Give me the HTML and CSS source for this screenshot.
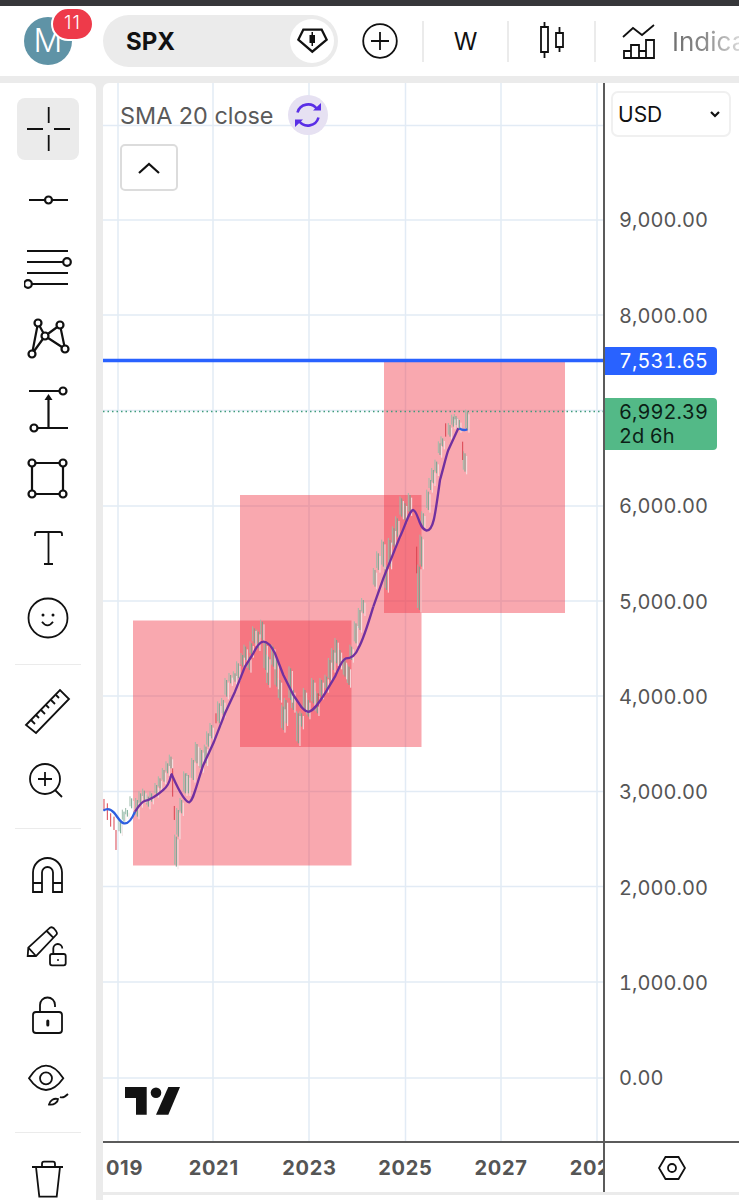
FILE: index.html
```html
<!DOCTYPE html>
<html lang="en">
<head>
    <meta charset="UTF-8">
    <meta name="viewport" content="width=device-width, initial-scale=1.0">
    <title>SPX chart</title>
    <link rel="stylesheet" href="styles.css">
</head>
<body>
    <div class="status-bar"></div>

    <header class="topbar">
        <div class="avatar">M<span class="avatar-count">11</span></div>
        <div class="symbol">
            <span class="symbol-name">SPX</span>
            <span class="symbol-badge">
                <svg class="line-icon" width="44" height="44" viewBox="0 0 44 44">
                    <path d="M13.3 10.7H31.7L36.7 20.7 22.3 32.7 8.3 20.7Z"/>
                    <path class="solid" d="M19.5 16H21.5V13H23V16H25V24H23V27H21.5V24H19.5Z"/>
                </svg>
            </span>
        </div>
        <svg class="line-icon thin add-symbol" width="36" height="36" viewBox="0 0 36 36">
            <circle cx="18" cy="18" r="16.8"/>
            <path d="M18 9V27M9 18H27"/>
        </svg>
        <span class="divider"></span>
        <span class="interval">W</span>
        <span class="divider"></span>
        <span class="chart-type">
            <svg class="line-icon thin" width="30" height="38" viewBox="0 0 30 38">
                <path d="M4 5H11V30H4ZM7.500 0V5M7.500 30V36M19 11H26V25H19ZM22.500 5V11M22.500 25V30"/>
            </svg>
        </span>
        <span class="divider"></span>
        <svg class="line-icon thin indicators-icon" width="33" height="36" viewBox="0 0 33 36">
            <path d="M1 14L11 5 20 12 32 2"/>
            <path d="M2 35V28H9V35ZM9 35V22H17V35ZM17 35V28H24V35ZM24 35V17H32V35ZM2 35H32"/>
        </svg>
        <span class="indicators-label">Indicators</span>
    </header>

    <main class="workspace">
        <nav class="tools">
            <div class="tool tool-active">
                <svg class="line-icon thin" width="48" height="48" viewBox="0 0 48 48"><path d="M24.700 2V18M24.700 30V46M3 24H19M30 24H46"/></svg>
            </div>
            <svg class="tool line-icon" width="48" height="48" viewBox="0 0 48 48">
                <path d="M5 24H21M28 24H44"/><circle cx="24.500" cy="24" r="3.500"/>
            </svg>
            <svg class="tool line-icon" width="48" height="48" viewBox="0 0 48 48">
                <path d="M3 7H44M3 18H39M3 29H44M8 40H44"/><circle cx="43" cy="18" r="3.800"/><circle cx="4" cy="40" r="3.800"/>
            </svg>
            <svg class="tool line-icon" width="48" height="48" viewBox="0 0 48 48">
                <path d="M14 9L8 40M14 9L21 22M21 22L8 40M21 22L41 35M36 11L21 22M36 11L41 35"/>
                <circle class="knob" cx="14" cy="9" r="3.500"/><circle class="knob" cx="36" cy="11" r="3.500"/><circle class="knob" cx="21" cy="22" r="3.500"/><circle class="knob" cx="8" cy="40" r="3.500"/><circle class="knob" cx="41" cy="35" r="3.500"/>
            </svg>
            <svg class="tool line-icon" width="48" height="48" viewBox="0 0 48 48">
                <path d="M5 5H35M14 42H44M24.500 42V12"/><path class="solid" d="M20.500 14L24.500 8 28.500 14Z"/>
                <circle class="knob" cx="39" cy="5" r="3.500"/><circle class="knob" cx="10" cy="42" r="3.500"/>
            </svg>
            <svg class="tool line-icon" width="48" height="48" viewBox="0 0 48 48">
                <path d="M8 8H39V39H8Z"/>
                <circle class="knob" cx="8" cy="8" r="3.500"/><circle class="knob" cx="39" cy="8" r="3.500"/><circle class="knob" cx="8" cy="39" r="3.500"/><circle class="knob" cx="39" cy="39" r="3.500"/>
            </svg>
            <svg class="tool line-icon thin" width="48" height="48" viewBox="0 0 48 48">
                <path d="M11 12V10Q11 8 13 8H36Q38 8 38 10V12M24.500 8V40M20 40H29"/>
            </svg>
            <svg class="tool line-icon thin" width="48" height="48" viewBox="0 0 48 48">
                <circle cx="24" cy="24" r="19.500"/>
                <path d="M18 27.700Q23.500 35 29 27.700"/>
                <circle class="solid" cx="19" cy="21" r="1.500"/><circle class="solid" cx="29" cy="21" r="1.500"/>
            </svg>
            <span class="tool-sep"></span>
            <svg class="tool line-icon thin" width="48" height="48" viewBox="0 0 48 48">
                <path d="M2 37L36 2 45 11 12 45Z"/>
                <path d="M7 32L11 36M12 27L15 30M17 22L21 26M22 17L25 20M27 12L31 16M32 7L35 10"/>
            </svg>
            <svg class="tool line-icon thin" width="48" height="48" viewBox="0 0 48 48">
                <circle cx="21" cy="22" r="15"/><path d="M31 33L38 40M14 22H28M21 15V29"/>
            </svg>
            <span class="tool-sep"></span>
            <svg class="tool line-icon thin" width="48" height="48" viewBox="0 0 48 48">
                <path d="M9 41V21.500A14.500 14.500 0 0 1 38 21.500V41H29V21.500A5.500 5.500 0 0 0 18 21.500V41ZM9 32H18M29 32H38"/>
            </svg>
            <svg class="tool line-icon thin" width="48" height="48" viewBox="0 0 48 48">
                <path d="M3.700 35L4.300 26.700 26 6.700Q28 5.500 30 7.500L32 10Q33.500 12 32.700 13.300L12 35ZM22.700 10L30 17.300M4.300 26.700L12 35"/>
                <rect x="26" y="33" width="15.700" height="11.300" rx="2"/>
                <path d="M29.300 33V27.500A4.500 4.500 0 0 1 38.300 27.500"/>
                <circle class="solid" cx="34" cy="39" r="1"/>
            </svg>
            <svg class="tool line-icon thin" width="48" height="48" viewBox="0 0 48 48">
                <rect x="9" y="19" width="29" height="21" rx="3"/>
                <path d="M16 19V12A7.500 7.500 0 0 1 31 12V14"/>
                <rect class="solid" x="22.300" y="26.500" width="3" height="7" rx="1.500"/>
            </svg>
            <svg class="tool line-icon thin" width="48" height="48" viewBox="0 0 48 48">
                <path d="M5 19.300Q13 6.700 22 6.700T39.300 19.300Q31 31 22 31T5 19.300Z"/>
                <circle cx="22" cy="19.300" r="6"/>
                <path d="M25 45.500C26 41 30 39 34 40C34 43 30 46.500 25 45.500ZM36 38C38 39 41 38 44 35"/>
            </svg>
            <span class="tool-sep"></span>
            <svg class="tool line-icon thin" width="48" height="48" viewBox="0 0 48 48">
                <path d="M8 12H39M12 12L15.300 41.700H32.700L36 12M18 11.500V9Q18 6.700 20 6.700H29Q31 6.700 31 9V11.500"/>
            </svg>
        </nav>

        <section class="chart">
            <div class="chart-panes">
                <div class="plot">
                    <svg class="plot-svg" width="501" height="1058" viewBox="103 83 501 1058">
                        <g class="grid">
                            <path d="M118 83V1141M213 83V1141M309 83V1141M405.500 83V1141M501 83V1141M597 83V1141"/>
                            <path d="M103 125.500H604M103 220H604M103 315H604M103 410.500H604M103 506H604M103 601H604M103 696H604M103 791.500H604M103 886.500H604M103 982H604M103 1078H604"/>
                        </g>

                        <rect class="zone" x="133" y="620.500" width="218.500" height="245"/>
                        <rect class="zone" x="240" y="495" width="181.500" height="252"/>
                        <rect class="zone" x="384" y="361" width="181" height="252"/>

                        <path class="last-price" d="M103 411.500H604"/>

                        <!-- weekly bars, traced from the left half and the right half -->
                        <g transform="translate(100 600) scale(.3333)">
                            <use class="bars bars-soft" href="#barsLeft" x="-5" y="-6"/>
                            <g class="bars">
                                <path id="barsLeft" d="M62 665V700M72 635V665M82 630V650M95 595V625M112 600V650M122 580V615M133 572V600M145 590V620M155 580V605M170 555V585M180 535V565M192 510V545M203 490V520M213 470V505M229 710V800M235 630V710M245 600V640M256 520V580M265 525V580M280 480V540M291 432V490M305 450V510M318 440V490M325 400V440M335 375V415M358 310V370M370 300V345M380 240V290M392 225V250M405 220V245M415 190V235M428 165V200M437 140V180M448 170V210M455 130V165M463 85V130M475 95V145M487 65V120M497 130V210M505 170V255M520 140V200M530 180V260M540 240V300M550 320V390M558 300V370M572 205V300M580 270V330M595 340V430M605 340V380M615 270V330M625 300V350M640 240V310M652 280V340M665 240V290M680 230V270M690 180V240M700 150V210M710 120V190M720 150V200M735 180V230M747 200V255M755 140V180M768 70V130M780 30V90M790 0V40"/>
                            </g>
                            <use class="bars bars-pale" href="#barsLeft" x="5" y="8"/>
                            <path class="bars-red" d="M12 597V630M22 610V660M32 640V680M42 650V690M48 690V750M218 505V590M223 618V660M348 340V370M655 280V320"/>
                        </g>
                        <g transform="translate(370 340) scale(.3333)">
                            <use class="bars bars-soft" href="#barsRight" x="-5" y="-6"/>
                            <g class="bars">
                                <path id="barsRight" d="M15 690V740M25 640V690M40 605V680M50 680V750M60 600V680M72 565V620M82 535V590M95 475V530M105 490V540M120 465V520M148 680V810M155 590V680M160 520V560M175 455V510M182 420V450M190 390V430M200 365V400M210 310V345M218 295V320M240 255V290M250 230V260M258 228V255M268 240V270M285 340V395M292 215V270"/>
                            </g>
                            <use class="bars bars-pale" href="#barsRight" x="5" y="8"/>
                            <path class="bars-red" d="M140 620V700M227 250V290M278 305V360"/>
                        </g>

                        <!-- SMA 20 -->
                        <g transform="translate(100 600) scale(.3333)">
                            <path class="sma sma-blue" d="M10 632C20 625 32 627 42 638S60 668 72 670 95 660 105 635"/>
                            <path class="sma" d="M105 635C115 620 125 605 135 603S165 592 190 570 210 525 215 523C225 545 250 605 268 607 280 600 285 570 310 495L340 430 375 340 405 275 435 200 460 160C470 140 480 125 490 125 505 125 515 140 525 160L550 225 580 285 605 322C612 330 620 337 628 335 640 330 650 320 675 280L705 230C715 210 725 178 738 175 750 175 765 170 775 145 790 120 805 70 820 20"/>
                        </g>
                        <g transform="translate(370 340) scale(.3333)">
                            <path class="sma" d="M10 800L40 715 90 590C105 560 118 510 130 510 145 515 145 565 170 572 190 572 195 530 210 420 220 385 228 350 235 330L265 265"/>
                            <path class="sma sma-blue" d="M268 265C275 270 282 272 292 268"/>
                        </g>

                        <path class="target-line" d="M103 360.500H604"/>

                        <g class="tv-logo">
                            <path d="M125 1087H146.700V1114.700H136V1098H125Z"/>
                            <circle cx="156" cy="1092.700" r="5.300"/>
                            <path d="M168.300 1087H180L168.300 1114.700H156Z"/>
                        </g>
                    </svg>

                    <div class="legend">
                        <div class="legend-row">
                            <span class="legend-title">SMA 20 close</span>
                            <span class="legend-sync">
                                <svg class="sync-icon" width="30" height="30" viewBox="0 0 30 30">
                                    <path d="M4.500 12.500A11 11 0 0 1 24 9M25.500 17.500A11 11 0 0 1 6 21"/>
                                    <path class="sync-head" d="M20 10.500H28V3ZM10 19.500H2V27Z"/>
                                </svg>
                            </span>
                        </div>
                        <button class="legend-toggle">
                            <svg class="line-icon" width="24" height="14" viewBox="0 0 24 14"><path d="M2 12L12 3 22 12"/></svg>
                        </button>
                    </div>
                </div>

                <aside class="price-axis">
                    <div class="currency">USD
                        <svg class="line-icon" width="12" height="8" viewBox="0 0 12 8"><path d="M2 2L6 6 10 2"/></svg>
                    </div>
                    <div class="price-scale">
                        <div class="price">9,000.00</div>
                        <div class="price">8,000.00</div>
                        <div class="price"></div>
                        <div class="price">6,000.00</div>
                        <div class="price">5,000.00</div>
                        <div class="price">4,000.00</div>
                        <div class="price">3,000.00</div>
                        <div class="price">2,000.00</div>
                        <div class="price">1,000.00</div>
                        <div class="price">0.00</div>
                    </div>
                    <div class="price-tag tag-target">7,531.65</div>
                    <div class="price-tag tag-last">6,992.39<br>2d 6h</div>
                </aside>
            </div>

            <div class="time-row">
                <div class="time-scale">
                    <span class="year">2019</span>
                    <span class="year">2021</span>
                    <span class="year">2023</span>
                    <span class="year">2025</span>
                    <span class="year">2027</span>
                    <span class="year">2029</span>
                </div>
                <div class="axis-settings">
                    <svg class="line-icon thin" width="28" height="24" viewBox="0 0 28 24">
                        <path d="M7.500 1H20.500L27 12 20.500 23H7.500L1 12Z"/><circle cx="14" cy="12" r="4"/>
                    </svg>
                </div>
            </div>
            <div class="chart-foot"></div>
        </section>
    </main>
</body>
</html>
```

FILE: styles.css
```css
* {
    box-sizing: border-box;
    margin: 0;
    padding: 0;
}

html, body {
    height: 1200px;
    overflow: hidden;
}

body {
    font-family: Inter, "Liberation Sans", sans-serif;
    color: #111;
    background-color: #ebebeb;
}

.status-bar {
    height: 6px;
    background-color: #36373a;
}

/* icons */
.line-icon {
    fill: none;
    stroke: #111;
    stroke-width: 2.2;
}

.line-icon.thin {
    stroke-width: 1.8;
}

.line-icon .solid {
    fill: #111;
    stroke: none;
}

.line-icon .knob {
    fill: #fff;
}

/* top bar */
.topbar {
    display: flex;
    align-items: center;
    height: 70px;
    padding-left: 24px;
    overflow: hidden;
    background-color: #fff;
}

.avatar {
    position: relative;
    flex: none;
    width: 48px;
    height: 48px;
    border-radius: 50%;
    background-color: #5f93a6;
    color: #fff;
    font-size: 32px;
    font-weight: 300;
    line-height: 48px;
    text-align: center;
}

.avatar-count {
    position: absolute;
    top: -10px;
    left: 27px;
    width: 43px;
    height: 34px;
    border: 2px solid #fff;
    border-radius: 17px;
    background-color: #ee3a4a;
    font-size: 19px;
    font-weight: 300;
    letter-spacing: 1px;
    line-height: 28px;
}

.symbol {
    display: flex;
    flex: none;
    align-items: center;
    justify-content: space-between;
    width: 235px;
    height: 52px;
    margin-left: 31px;
    padding: 0 4px 0 23px;
    border-radius: 26px;
    background-color: #ebebeb;
}

.symbol-name {
    font-size: 24px;
    font-weight: 700;
}

.symbol-badge {
    width: 44px;
    height: 44px;
    border-radius: 50%;
    background-color: #fff;
}

.add-symbol {
    flex: none;
    margin-left: 24px;
}

.divider {
    flex: none;
    width: 2px;
    height: 41px;
    background-color: #ebebeb;
}

.add-symbol + .divider {
    margin-left: 24px;
}

.interval {
    flex: none;
    width: 83px;
    font-size: 24px;
    text-align: center;
}

.chart-type {
    display: flex;
    flex: none;
    justify-content: center;
    width: 85px;
}

.indicators-icon {
    flex: none;
    margin-left: 26px;
}

.indicators-label {
    flex: none;
    width: 110px;
    margin-left: 17px;
    background: linear-gradient(90deg, #6f6f6f, #8a8a8a 30%, #dadada 62%);
    -webkit-background-clip: text;
    background-clip: text;
    color: transparent;
    font-size: 26px;
}

/* workspace */
.workspace {
    display: flex;
    gap: 7px;
    height: 1124px;
    padding-top: 7px;
}

.tools {
    display: grid;
    flex: none;
    grid-template-rows: 62px 64px 68px 70px 72px 69px 69px 70px 23px 71px 69px 24px 70px 70px 72px 66px 26px 70px;
    justify-items: center;
    width: 96px;
    height: 1117px;
    padding-top: 15px;
    overflow: hidden;
    border-top-right-radius: 6px;
    background-color: #fff;
}

.tool {
    align-self: end;
}

.tool-active {
    display: flex;
    align-items: center;
    justify-content: center;
    width: 62px;
    height: 62px;
    border-radius: 8px;
    background-color: #ebebeb;
}

.tool-sep {
    align-self: end;
    width: 66px;
    height: 1px;
    background-color: #ebebeb;
}

/* chart */
.chart {
    flex: 1;
    min-width: 0;
    height: 1117px;
    overflow: hidden;
    border-top-left-radius: 6px;
    background-color: #fff;
}

.chart-panes {
    display: flex;
    height: 1058px;
}

.plot {
    position: relative;
    flex: none;
    width: 500px;
    overflow: hidden;
}

.plot-svg {
    display: block;
}

.grid path {
    fill: none;
    stroke: #e2ebf5;
    stroke-width: 1.500;
}

.zone {
    fill: #f23645;
    fill-opacity: .43;
}

.last-price {
    fill: none;
    stroke: #3f9c7c;
    stroke-dasharray: 1.500 3;
    stroke-width: 1.500;
}

.target-line {
    fill: none;
    stroke: #2962ff;
    stroke-width: 3.500;
}

.bars {
    fill: none;
    stroke: #6fa690;
    stroke-width: 3;
}

.bars-soft {
    stroke: #9dbcab;
}

.bars-pale {
    stroke: #f3e6e6;
}

.bars-red {
    fill: none;
    stroke: #d9434f;
    stroke-width: 3;
}

.sma {
    fill: none;
    stroke: #71309f;
    stroke-width: 7;
    stroke-linejoin: round;
}

.sma-blue {
    stroke: #2f5fe0;
}

.tv-logo {
    fill: #131313;
}

.legend {
    position: absolute;
    top: 11px;
    left: 17px;
}

.legend-row {
    display: flex;
    align-items: center;
    gap: 14.500px;
    height: 42px;
}

.legend-title {
    color: #5a5a5a;
    font-size: 23.400px;
}

.legend-sync {
    display: flex;
    align-items: center;
    justify-content: center;
    width: 40px;
    height: 40px;
    border-radius: 50%;
    background-color: #e6e1f2;
}

.sync-icon {
    fill: none;
    stroke: #5a2fe6;
    stroke-width: 2.600;
}

.sync-icon .sync-head {
    fill: #5a2fe6;
    stroke: none;
}

.legend-toggle {
    display: flex;
    align-items: center;
    justify-content: center;
    width: 58px;
    height: 47px;
    margin-top: 8px;
    border: 2px solid #dcdcdc;
    border-radius: 5px;
    background-color: #fff;
}

.price-axis {
    position: relative;
    flex: 1;
    border-left: 2px solid #5b5b5b;
}

.currency {
    position: absolute;
    top: 8px;
    left: 6px;
    display: flex;
    align-items: center;
    justify-content: space-between;
    width: 120px;
    height: 46px;
    padding: 0 8px 0 5px;
    border: 2px solid #f0f0f0;
    border-radius: 7px;
    font-size: 21px;
}

.price-scale {
    padding-top: 90.300px;
}

.price {
    height: 95.350px;
    padding-left: 14px;
    color: #555;
    font-size: 20px;
    font-variant-numeric: tabular-nums;
    letter-spacing: .05px;
    line-height: 95.350px;
}

.price-tag {
    position: absolute;
    left: 0;
    width: 112px;
    padding-left: 14px;
    border-radius: 0 4px 4px 0;
    font-size: 20px;
    font-variant-numeric: tabular-nums;
    letter-spacing: .05px;
}

.tag-target {
    top: 264px;
    height: 28px;
    background-color: #2962ff;
    color: #fff;
    line-height: 28px;
}

.tag-last {
    top: 315px;
    height: 52px;
    padding-top: 2px;
    background-color: #53b987;
    color: #0b1f16;
    line-height: 24px;
}

/* time axis */
.time-row {
    display: flex;
    height: 51px;
    border-top: 2px solid #5b5b5b;
}

.time-scale {
    display: flex;
    flex: none;
    align-items: center;
    width: 502px;
    overflow: hidden;
    clip-path: inset(0 0 0 3px);
    border-right: 2px solid #5b5b5b;
}

.year {
    flex: none;
    width: 95.800px;
    color: #555;
    font-size: 20px;
    font-weight: 700;
    letter-spacing: .7px;
    text-align: center;
}

.year:first-child {
    margin-left: -33px;
}

.axis-settings {
    display: flex;
    flex: 1;
    align-items: center;
    justify-content: center;
}

.chart-foot {
    height: 3px;
    background-color: #ebebeb;
}
```
